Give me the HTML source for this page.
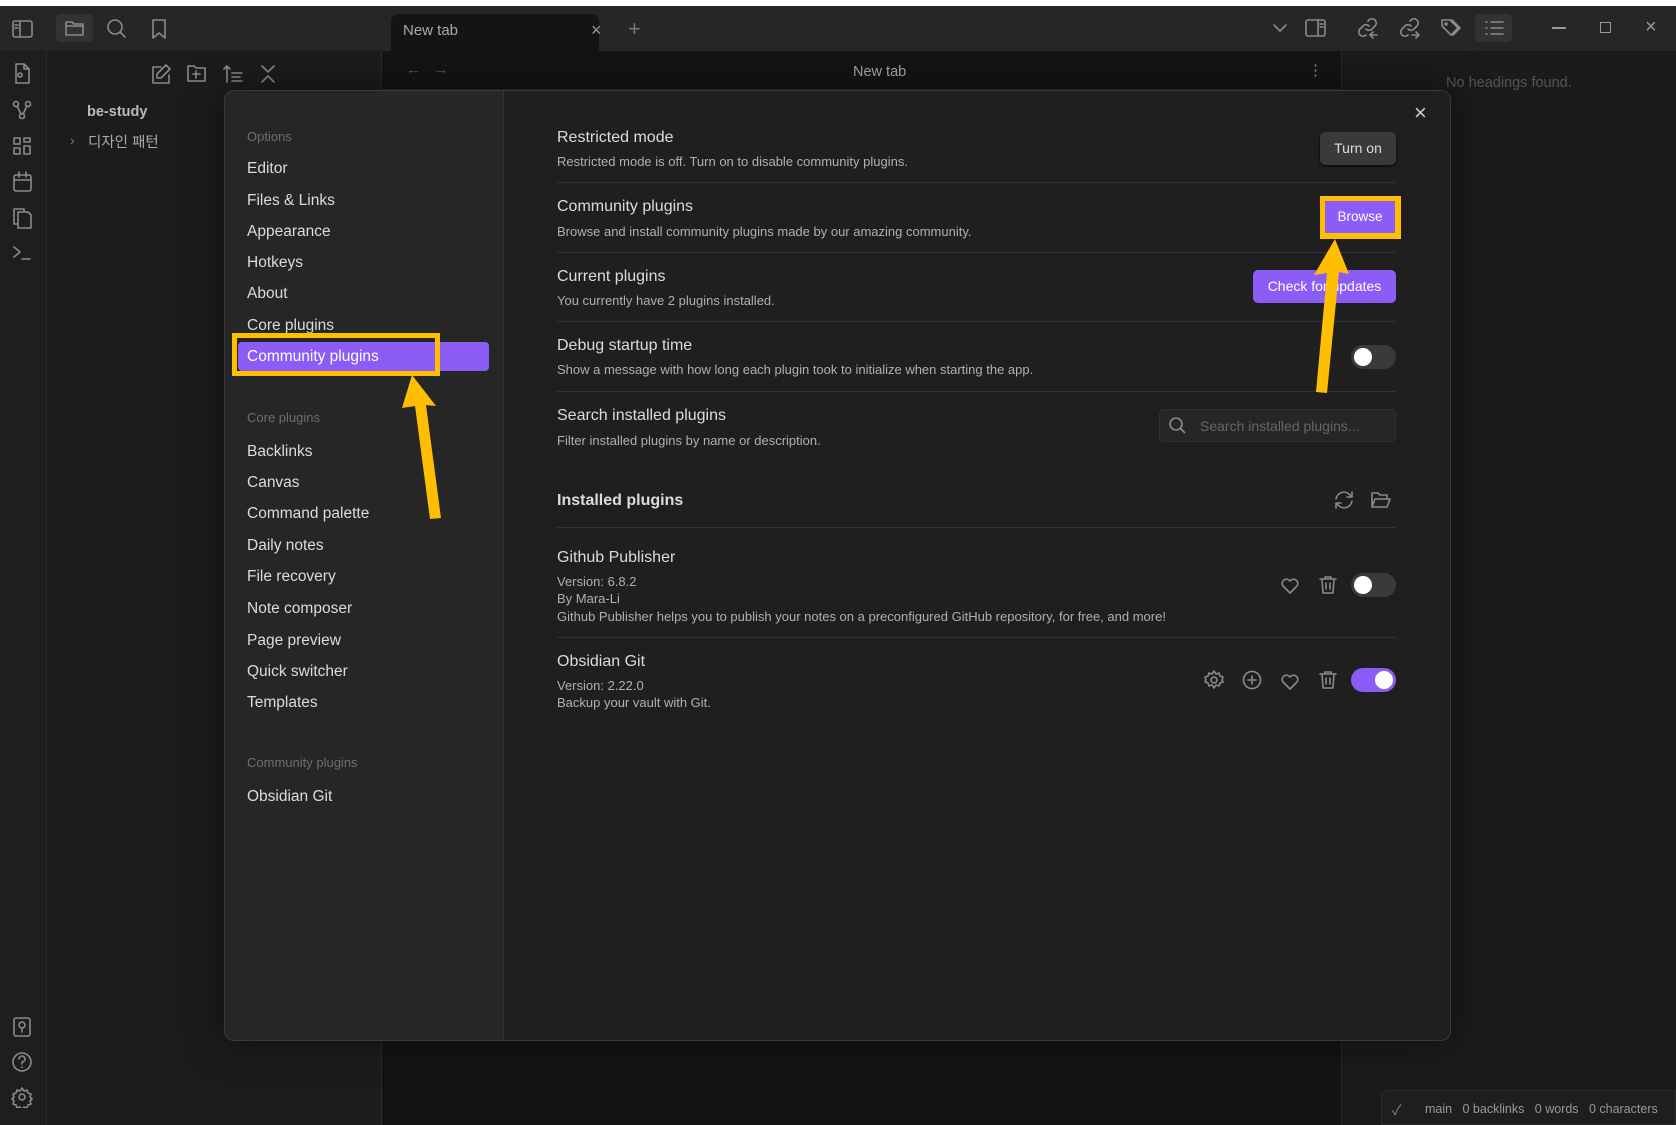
<!DOCTYPE html>
<html><head><meta charset="utf-8"><style>
*{box-sizing:border-box;margin:0;padding:0}
body{width:1676px;height:1125px;overflow:hidden;background:#1b1b1b;font-family:"Liberation Sans","Noto Sans CJK KR",sans-serif;position:relative;color:#dadada}
.a{position:absolute}
svg{position:absolute;fill:none;stroke:#8a8a8a;stroke-width:1.6;stroke-linecap:round;stroke-linejoin:round}
.t{font-size:16px;color:#dcdcdc;position:absolute;left:557px}
.d{font-size:13px;color:#b0b0b0;position:absolute;left:557px}
.sep{position:absolute;left:557px;width:839px;height:1px;background:#333}
.si{position:absolute;left:247px;font-size:15.5px;color:#dcdcdc}
.sh{position:absolute;left:247px;font-size:13px;color:#6e6e6e}
.tg{position:absolute;width:45px;height:24px;border-radius:12px;background:#3a3a3a}
.tg:after{content:"";position:absolute;left:3px;top:3px;width:18px;height:18px;border-radius:50%;background:#fff}
.tg.on{background:#8b5cf6}.tg.on:after{left:24px}
</style></head><body>
<div class="a" style="left:0;top:0;width:1676px;height:6px;background:#fff"></div>
<div class="a" style="left:0;top:6px;width:1676px;height:45px;background:#262626"></div>
<div class="a" style="left:0;top:51px;width:47px;height:1074px;background:#1e1e1e;border-right:1px solid #2c2c2c"></div>
<div class="a" style="left:47px;top:51px;width:335px;height:1074px;background:#1c1c1c;border-right:1px solid #2c2c2c"></div>
<div class="a" style="left:382px;top:51px;width:959px;height:1074px;background:#141414"></div>
<div class="a" style="left:382px;top:89px;width:959px;height:1px;background:#2a2a2a"></div>
<div class="a" style="left:1341px;top:51px;width:335px;height:1074px;background:#1b1b1b;border-left:1px solid #262626"></div>
<div class="a" style="left:391px;top:14px;width:208px;height:37px;background:#141414;border-radius:7px 7px 0 0"></div>
<div class="a" style="left:403px;top:22px;font-size:15px;color:#aaa">New tab</div>
<div class="a" style="left:591px;top:20px;font-size:18px;color:#999">×</div>
<div class="a" style="left:628px;top:16px;font-size:22px;color:#777">+</div>
<div class="a" style="left:853px;top:64px;font-size:14.5px;color:#aaa">New tab</div>
<div class="a" style="left:406px;top:61px;font-size:15px;color:#555">←&nbsp;&nbsp;&nbsp;→</div>
<div class="a" style="left:1308px;top:61px;font-size:15px;color:#999">⋮</div>
<div class="a" style="left:1446px;top:75px;font-size:14.5px;color:#555">No headings found.</div>
<div class="a" style="left:56px;top:14px;width:37px;height:28px;background:#333;border-radius:5px"></div>
<svg style="left:12px;top:19px" width="22" height="20"><rect x="1" y="2" width="19" height="16" rx="2"/><path d="M8 2v16M3 6h3M3 9h3"/></svg>
<svg style="left:64px;top:18px" width="22" height="20"><path d="M2 4h6l2 2h9v11H2z M2 8h17"/></svg>
<svg style="left:106px;top:18px" width="22" height="22"><circle cx="9" cy="9" r="7"/><path d="M14 14l5 5"/></svg>
<svg style="left:150px;top:18px" width="20" height="22"><path d="M3 2h12v18l-6-5-6 5z"/></svg>
<svg style="left:1272px;top:22px" width="16" height="12"><path d="M2 3l6 6 6-6"/></svg>
<svg style="left:1305px;top:18px" width="22" height="20"><rect x="1" y="2" width="19" height="16" rx="2"/><path d="M13 2v16M15 6h3M15 9h3"/></svg>
<svg style="left:1357px;top:17px" width="22" height="22"><path d="M9 12a4 4 0 0 0 6 0l3-3a4 4 0 0 0-6-6l-1 1M12 9a4 4 0 0 0-6 0l-3 3a4 4 0 0 0 6 6M16 15l-3 3 3 3M13 18h7"/></svg>
<svg style="left:1399px;top:17px" width="22" height="22"><path d="M9 12a4 4 0 0 0 6 0l3-3a4 4 0 0 0-6-6l-1 1M12 9a4 4 0 0 0-6 0l-3 3a4 4 0 0 0 6 6M17 15l3 3-3 3M13 18h7"/></svg>
<svg style="left:1440px;top:17px" width="22" height="22"><path d="M2 3h8l8 8-7 7-9-9z M12 3l8 8-7 7"/><circle cx="6" cy="7" r="1"/></svg>
<div class="a" style="left:1475px;top:14px;width:37px;height:28px;background:#333;border-radius:5px"></div>
<svg style="left:1484px;top:19px" width="22" height="18"><path d="M2 3h1M7 3h12M2 9h1M7 9h12M2 15h1M7 15h12"/></svg>
<div class="a" style="left:1552px;top:27px;width:14px;height:1.5px;background:#999"></div>
<div class="a" style="left:1600px;top:22px;width:11px;height:11px;border:1.5px solid #999"></div>
<div class="a" style="left:1645px;top:16px;font-size:20px;color:#999">×</div>
<svg style="left:12px;top:63px" width="20" height="22"><path d="M4 1h8l5 5v14H4z M12 1v5h5"/><circle cx="8" cy="12" r="2"/></svg>
<svg style="left:12px;top:100px" width="20" height="20"><circle cx="4" cy="4" r="2.5"/><circle cx="16" cy="4" r="2.5"/><circle cx="10" cy="16" r="2.5"/><path d="M5 6l4 8M15 6l-4 8"/></svg>
<svg style="left:12px;top:136px" width="20" height="20"><rect x="2" y="2" width="6" height="6"/><rect x="12" y="2" width="6" height="4"/><rect x="2" y="12" width="6" height="6"/><rect x="12" y="10" width="6" height="8"/></svg>
<svg style="left:12px;top:171px" width="20" height="22"><rect x="2" y="4" width="17" height="16" rx="2"/><path d="M2 9h17M7 1v5M14 1v5"/></svg>
<svg style="left:12px;top:207px" width="20" height="22"><path d="M6 5h10l3 3v13H6z M2 2h10v3M2 2v15h4"/></svg>
<svg style="left:12px;top:243px" width="20" height="20"><path d="M2 4l6 5-6 5M10 16h8"/></svg>
<svg style="left:12px;top:1016px" width="20" height="22"><rect x="2" y="2" width="16" height="18" rx="2"/><circle cx="10" cy="9" r="3"/><path d="M10 12v4"/></svg>
<svg style="left:11px;top:1051px" width="22" height="22"><circle cx="11" cy="11" r="9"/><path d="M8 8a3 3 0 1 1 3 3v2M11 16v.5"/></svg>
<svg style="left:11px;top:1086px" width="22" height="22"><circle cx="11" cy="11" r="3"/><path d="M11 2l2 3 3-1 1 3 3 1-1 3 2 2-2 2 1 3-3 1-1 3-3-1-2 3-2-3-3 1-1-3-3-1 1-3-2-2 2-2-1-3 3-1 1-3 3 1z"/></svg>
<svg style="left:150px;top:63px" width="22" height="22"><path d="M16 2l4 4-9 9H7v-4z M11 4H3v16h16v-8"/></svg>
<svg style="left:186px;top:63px" width="22" height="20"><path d="M2 3h6l2 2h9v13H2z M10 8v7M7 11h7"/></svg>
<svg style="left:222px;top:63px" width="22" height="22"><path d="M5 19V3M2 6l3-3 3 3M10 10h10M10 14h8M10 18h10"/></svg>
<svg style="left:260px;top:64px" width="16" height="20"><path d="M2 2l6 6 6-6M2 18l6-6 6 6"/></svg>
<div class="a" style="left:87px;top:104px;font-size:14.5px;font-weight:bold;color:#bbb">be-study</div>
<div class="a" style="left:70px;top:132px;font-size:14px;color:#777">›</div>
<div class="a" style="left:88px;top:131px;font-size:14.5px;color:#aaa">디자인 패턴</div>
<div class="a" style="left:1381px;top:1090px;width:295px;height:35px;background:#1e1e1e;border:1px solid #2a2a2a;border-radius:6px 0 0 0"></div>
<div class="a" style="left:1392px;top:1100px;font-size:14px;color:#888">✓</div>
<div class="a" style="left:1425px;top:1102px;font-size:12.5px;color:#999;white-space:nowrap">main&nbsp;&nbsp; 0 backlinks&nbsp;&nbsp; 0 words&nbsp;&nbsp; 0 characters</div>
<div class="a" style="left:224px;top:90px;width:1227px;height:951px;background:#1f1f1f;border:1px solid #3a3a3a;border-radius:10px;overflow:hidden;box-shadow:0 0 40px rgba(0,0,0,.5)">
<div class="a" style="left:0;top:0;width:279px;height:951px;background:#262626;border-right:1px solid #333"></div>
</div>
<div class="sh" style="top:129px">Options</div>
<div class="si" style="top:160px">Editor</div>
<div class="si" style="top:192px">Files &amp; Links</div>
<div class="si" style="top:223px">Appearance</div>
<div class="si" style="top:254px">Hotkeys</div>
<div class="si" style="top:285px">About</div>
<div class="si" style="top:317px">Core plugins</div>
<div class="a" style="left:238px;top:342px;width:251px;height:29px;background:#8b5cf6;border-radius:4px"></div>
<div class="si" style="top:348px;color:#fff">Community plugins</div>
<div class="a" style="left:232px;top:333px;width:208px;height:43px;border:5px solid #ffbf00"></div>
<div class="sh" style="top:410px">Core plugins</div>
<div class="si" style="top:443px">Backlinks</div>
<div class="si" style="top:474px">Canvas</div>
<div class="si" style="top:505px">Command palette</div>
<div class="si" style="top:537px">Daily notes</div>
<div class="si" style="top:568px">File recovery</div>
<div class="si" style="top:600px">Note composer</div>
<div class="si" style="top:632px">Page preview</div>
<div class="si" style="top:663px">Quick switcher</div>
<div class="si" style="top:694px">Templates</div>
<div class="sh" style="top:755px">Community plugins</div>
<div class="si" style="top:788px">Obsidian Git</div>
<div class="a" style="left:1414px;top:100px;font-size:22px;color:#ccc">×</div>
<div class="t" style="top:129px">Restricted mode</div>
<div class="d" style="top:154px">Restricted mode is off. Turn on to disable community plugins.</div>
<div class="a" style="left:1320px;top:132px;width:76px;height:33px;background:#3a3a3a;border-radius:5px;font-size:14px;color:#ddd;text-align:center;line-height:33px;box-shadow:0 1px 2px #000">Turn on</div>
<div class="sep" style="top:182px"></div>
<div class="t" style="top:198px">Community plugins</div>
<div class="d" style="top:224px">Browse and install community plugins made by our amazing community.</div>
<div class="a" style="left:1320px;top:196px;width:81px;height:43px;background:#ffbf00"></div>
<div class="a" style="left:1325px;top:201px;width:70px;height:32px;background:#8b5cf6;font-size:13.5px;color:#fff;text-align:center;line-height:32px">Browse</div>
<div class="sep" style="top:252px"></div>
<div class="t" style="top:268px">Current plugins</div>
<div class="d" style="top:293px">You currently have 2 plugins installed.</div>
<div class="a" style="left:1253px;top:270px;width:143px;height:33px;background:#8b5cf6;border-radius:5px;font-size:14px;color:#fff;text-align:center;line-height:33px">Check for updates</div>
<div class="sep" style="top:321px"></div>
<div class="t" style="top:337px">Debug startup time</div>
<div class="d" style="top:362px">Show a message with how long each plugin took to initialize when starting the app.</div>
<div class="tg" style="left:1351px;top:345px"></div>
<div class="sep" style="top:391px"></div>
<div class="t" style="top:407px">Search installed plugins</div>
<div class="d" style="top:433px">Filter installed plugins by name or description.</div>
<div class="a" style="left:1159px;top:409px;width:237px;height:33px;background:#262626;border:1px solid #303030;border-radius:5px"></div>
<svg style="left:1168px;top:416px" width="20" height="20"><circle cx="8" cy="8" r="6"/><path d="M12.5 12.5l4 4"/></svg>
<div class="a" style="left:1200px;top:418px;font-size:14px;color:#666">Search installed plugins...</div>
<div class="t" style="top:492px;font-weight:bold">Installed plugins</div>
<svg style="left:1333px;top:490px" width="22" height="20"><path d="M3 9a8 8 0 0 1 14-4l2 2M19 11a8 8 0 0 1-14 4l-2-2M19 2v5h-5M3 18v-5h5"/></svg>
<svg style="left:1370px;top:490px" width="22" height="20"><path d="M2 17V3h6l2 2h7v4M2 17l3-8h15l-3 8z"/></svg>
<div class="sep" style="top:527px"></div>
<div class="t" style="top:549px">Github Publisher</div>
<div class="d" style="top:574px">Version: 6.8.2</div>
<div class="d" style="top:591px">By Mara-Li</div>
<div class="d" style="top:609px">Github Publisher helps you to publish your notes on a preconfigured GitHub repository, for free, and more!</div>
<svg style="left:1280px;top:576px" width="20" height="18"><path d="M10 17l-7-7a4 4 0 0 1 7-5 4 4 0 0 1 7 5z"/></svg>
<svg style="left:1318px;top:575px" width="20" height="20"><path d="M2 4h16M7 4V2h6v2M4 4l1 14h10l1-14M8 8v6M12 8v6"/></svg>
<div class="tg" style="left:1351px;top:573px"></div>
<div class="sep" style="top:637px"></div>
<div class="t" style="top:653px">Obsidian Git</div>
<div class="d" style="top:678px">Version: 2.22.0</div>
<div class="d" style="top:695px">Backup your vault with Git.</div>
<svg style="left:1204px;top:670px" width="20" height="20"><circle cx="10" cy="10" r="3"/><path d="M10 1l2 3 3-1 1 3 3 1-1 3 1 2-3 1-1 3-3-1-2 3-2-3-3 1-1-3-3-1 1-2-1-3 3-1 1-3 3 1z"/></svg>
<svg style="left:1242px;top:670px" width="20" height="20"><circle cx="10" cy="10" r="8.5"/><path d="M10 6v8M6 10h8"/></svg>
<svg style="left:1280px;top:672px" width="20" height="18"><path d="M10 17l-7-7a4 4 0 0 1 7-5 4 4 0 0 1 7 5z"/></svg>
<svg style="left:1318px;top:670px" width="20" height="20"><path d="M2 4h16M7 4V2h6v2M4 4l1 14h10l1-14M8 8v6M12 8v6"/></svg>
<div class="tg on" style="left:1351px;top:668px"></div>
<svg style="left:0;top:0;stroke:none" width="1676" height="1125"><path fill="#ffbf00" d="M412 375 L436 406 L426 405 L441 518 L430 519 L415 406 L402 408 Z"/><path fill="#ffbf00" d="M1335 239 L1349 274 L1339 272 L1327 393 L1316 392 L1327 273 L1314 275 Z"/></svg>
</body></html>
